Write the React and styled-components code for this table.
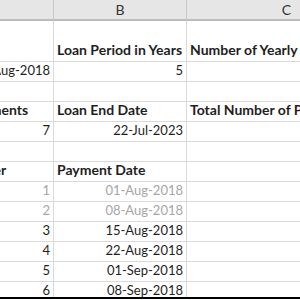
import styled, { createGlobalStyle } from "styled-components";

const GlobalStyle = createGlobalStyle`
  body {
    margin: 0;
    background: #fff;
    font-family: Lato, "Liberation Sans", sans-serif;
  }
`;

const COLS = [160, 133, 200];

const rows = [
  { height: 41, cells: [{ text: "Loan Start Date", bold: true }, { text: "Loan Period in Years", bold: true }, { text: "Number of Yearly Payments", bold: true }] },
  { cells: [{ text: "01-Aug-2018", right: true }, { text: "5", right: true }, {}] },
  { cells: [{}, {}, {}] },
  { cells: [{ text: "Number of Payments", bold: true }, { text: "Loan End Date", bold: true }, { text: "Total Number of Payments", bold: true }] },
  { cells: [{ text: "7", right: true }, { text: "22-Jul-2023", right: true }, {}] },
  { cells: [{}, {}, {}] },
  { cells: [{ text: "Payment Number", bold: true }, { text: "Payment Date", bold: true }, {}] },
  { cells: [{ text: "1", right: true, muted: true }, { text: "01-Aug-2018", right: true, muted: true }, {}] },
  { cells: [{ text: "2", right: true, muted: true }, { text: "08-Aug-2018", right: true, muted: true }, {}] },
  { cells: [{ text: "3", right: true }, { text: "15-Aug-2018", right: true }, {}] },
  { cells: [{ text: "4", right: true }, { text: "22-Aug-2018", right: true }, {}] },
  { cells: [{ text: "5", right: true }, { text: "01-Sep-2018", right: true }, {}] },
  { cells: [{ text: "6", right: true }, { text: "08-Sep-2018", right: true }, {}] },
];

export default function App() {
  return (
    <>
      <GlobalStyle />
      <Frame>
        <Sheet>
          <HeaderRow>
            {["A", "B", "C"].map((letter, i) => (
              <HeaderCell key={letter} $width={COLS[i]}>
                {letter}
              </HeaderCell>
            ))}
          </HeaderRow>
          {rows.map((row, r) => (
            <Row key={r} $height={row.height || 20}>
              {row.cells.map((cell, c) => (
                <Cell
                  key={c}
                  $width={COLS[c]}
                  $right={cell.right}
                  $bold={cell.bold}
                  $muted={cell.muted}
                >
                  {cell.text}
                </Cell>
              ))}
            </Row>
          ))}
        </Sheet>
      </Frame>
    </>
  );
}

const Frame = styled.div`
  width: 300px;
  height: 297px;
  overflow: hidden;
  border-bottom: 2px solid #000;
`;

const Sheet = styled.div`
  display: flex;
  flex-direction: column;
  margin-left: -106px;
  width: max-content;
`;

const HeaderRow = styled.div`
  display: flex;
  height: 21px;
  box-sizing: border-box;
  background: #e6e6e6;
  border-bottom: 2px solid #bcbcbc;
`;

const HeaderCell = styled.div`
  width: ${(p) => p.$width}px;
  box-sizing: border-box;
  border-right: 1px solid #c9c9c9;
  display: flex;
  align-items: center;
  justify-content: center;
  font-size: 14px;
  color: #333;
`;

const Row = styled.div`
  display: flex;
  height: ${(p) => p.$height}px;
`;

const Cell = styled.div`
  width: ${(p) => p.$width}px;
  flex-shrink: 0;
  box-sizing: border-box;
  border-right: 1px solid #dadada;
  border-bottom: 1px solid #dadada;
  display: flex;
  align-items: flex-end;
  justify-content: ${(p) => (p.$right ? "flex-end" : "flex-start")};
  padding: 0 3px 3px;
  white-space: nowrap;
  font-size: ${(p) => (p.$bold ? 14 : 13)}px;
  line-height: 16px;
  font-weight: ${(p) => (p.$bold ? 700 : 400)};
  color: ${(p) => (p.$muted ? "#a6a6a6" : "#1e1e1e")};
`;
